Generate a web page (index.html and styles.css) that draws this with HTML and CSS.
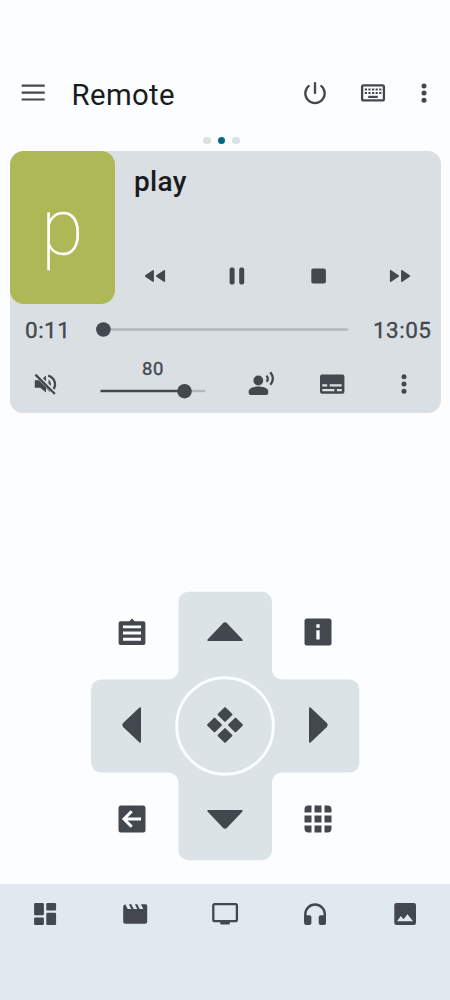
FILE: index.html
```html
<!DOCTYPE html>
<html lang="en">
<head>
<meta charset="utf-8">
<title>Remote</title>
<link rel="stylesheet" href="styles.css">
</head>
<body>
<div class="app">
  <header class="topbar">
    <svg class="icon menu" width="30" height="30" viewBox="-15 -15 30 30"><path d="M-11.3-7.3h23M-11.3-.3h23M-11.3 6.500h23" fill="none" stroke="currentColor" stroke-width="2.200"/></svg>
    <h1>Remote</h1>
    <div class="actions">
      <svg class="icon" width="30" height="30" viewBox="-15 -15 30 30"><g fill="none" stroke="currentColor" stroke-width="2.300" stroke-linecap="round"><path d="M0-9.800V0M-6.300-7A9.700 9.700 0 1 0 6.300-7"/></g></svg>
      <svg class="icon" width="30" height="30" viewBox="-15 -15 30 30"><rect x="-10.900" y="-7.600" width="21.800" height="15" rx="1.400" fill="none" stroke="currentColor" stroke-width="2.300"/><path d="M-8.200-3.500H8.400M-8.200 0H8.400" fill="none" stroke="currentColor" stroke-width="2.200" stroke-dasharray="2.200 1.400"/><path d="M-4.800 3.900H4.800" stroke="currentColor" stroke-width="2.200"/></svg>
      <svg class="icon" width="30" height="30" viewBox="-15 -15 30 30"><circle cy="-7.100" r="2.500"/><circle r="2.500"/><circle cy="7.200" r="2.500"/></svg>
    </div>
  </header>

  <div class="pager"><i></i><i class="on"></i><i></i></div>

  <section class="card">
    <div class="now">
      <div class="cover"><span>p</span></div>
      <div class="info">
        <h2>play</h2>
        <div class="transport">
          <svg class="icon" width="30" height="24" viewBox="-15 -12 30 24"><g stroke="currentColor" stroke-width="1.600" stroke-linejoin="round"><path d="M-9.300 0L-1.900-5.200V5.200ZM1.800 0L9.300-5.200V5.200Z"/></g></svg>
          <svg class="icon" width="30" height="24" viewBox="-15 -12 30 24"><rect x="-7.400" y="-8.500" width="5" height="17" rx="1.900"/><rect x="2.200" y="-8.500" width="5" height="17" rx="1.900"/></svg>
          <svg class="icon" width="30" height="24" viewBox="-15 -12 30 24"><rect x="-7.700" y="-7.400" width="14.600" height="14.800" rx="2"/></svg>
          <svg class="icon" width="30" height="24" viewBox="-15 -12 30 24"><g stroke="currentColor" stroke-width="1.600" stroke-linejoin="round"><path d="M9.300 0L1.900-5.200V5.200ZM-1.800 0L-9.300-5.200V5.200Z"/></g></svg>
        </div>
      </div>
    </div>
    <div class="seek">
      <span class="time">0:11</span>
      <svg class="icon track" width="254" height="16" viewBox="0 0 254 16"><path d="M7 7.500H252" stroke="#b3b8bc" stroke-width="2.400"/><circle cx="7.400" cy="7.500" r="7.300"/></svg>
      <span class="time end">13:05</span>
    </div>
    <div class="controls">
      <svg class="icon" width="30" height="30" viewBox="-15 -15 30 30"><path d="M-10.200-3.800H-6L5 7V8L1 4V8.500L-4.800 3.700H-10.200Z"/><path d="M-3.500-4.500L1-8.500V0ZM3.500-4.400Q6.500-2 5.800 2L3.500-.2Z"/><path d="M3.200-8.300C9.500-6.300 12 .2 8.300 5.400" fill="none" stroke="currentColor" stroke-width="2.300"/><path d="M-8.500-10.600L11.300 9.200" stroke="#dadfe3" stroke-width="2.200"/><path d="M-9.600-9.400L9.900 10" stroke="currentColor" stroke-width="2.300"/></svg>
      <div class="volume">
        <span>80</span>
        <svg class="icon" width="106" height="16" viewBox="0 0 106 16"><path d="M84 8H105.300" stroke="#b3b8bc" stroke-width="2.400"/><path d="M.5 8H84" stroke="currentColor" stroke-width="2.400"/><circle cx="84.500" cy="8.200" r="7.300"/></svg>
      </div>
      <svg class="icon" width="30" height="30" viewBox="-15 -15 30 30"><circle cx="-2.700" cy="-3.500" r="4.900"/><path d="M-12.300 9V7.200C-12.300 3.500-6 2.500-2.700 2.500S7.200 3.500 7.200 7.200V9Q7.200 11 5.200 11H-10.300Q-12.300 11-12.300 9Z"/><path d="M5.600-8.400Q8-5.300 5.600-2.200M9.300-11.800Q14.500-5.400 9.300.8" fill="none" stroke="currentColor" stroke-width="2.300"/></svg>
      <svg class="icon" width="30" height="30" viewBox="-15 -15 30 30"><rect x="-12" y="-9.600" width="24.400" height="19.400" rx="2"/><path d="M-9.700 1.300h4.900M-2.300 1.300H9.700M-9.700 6.200H2.400M4.900 6.200h4.900" stroke="#dadfe3" stroke-width="2.300"/></svg>
      <svg class="icon" width="30" height="30" viewBox="-15 -15 30 30"><circle cy="-7.200" r="2.500"/><circle r="2.500"/><circle cy="7.200" r="2.500"/></svg>
    </div>
  </section>

  <main class="dpad">
    <svg class="cross" width="280" height="280" viewBox="-140 -140 280 280"><path d="M-37-134.300H37A10 10 0 0 1 47-124.300V-56.600A10 10 0 0 0 57-46.600H124.300A10 10 0 0 1 134.300-36.600V36.600A10 10 0 0 1 124.300 46.600H57A10 10 0 0 0 47 56.600V124.300A10 10 0 0 1 37 134.300H-36.500A10 10 0 0 1-46.500 124.300V56.600A10 10 0 0 0-56.500 46.600H-123.900A10 10 0 0 1-133.900 36.600V-36.600A10 10 0 0 1-123.900-46.600H-56.500A10 10 0 0 0-46.500-56.600V-124.300A10 10 0 0 1-36.500-134.300Z" fill="#dbe3e7"/><circle r="48.300" fill="none" stroke="#fbfdff" stroke-width="2.900"/></svg>
    <svg class="icon" width="40" height="40" viewBox="-20 -20 40 40"><path d="M-11.400-10.700H-2.700L0-13.600 2.700-10.700H11.400Q13.400-10.700 13.400-8.700V11Q13.400 13 11.400 13H-11.400Q-13.400 13-13.400 11V-8.700Q-13.400-10.700-11.400-10.700Z"/><path d="M-9-5.100H9M-9 1H9M-9 7.200H9" stroke="#fbfdff" stroke-width="2.900"/></svg>
    <svg class="icon" width="40" height="40" viewBox="-20 -20 40 40"><path d="M-16.800 8.100L-1.600-8Q0-9.400 1.600-8L16.800 8.100Z" stroke="currentColor" stroke-width="1.800" stroke-linejoin="round"/></svg>
    <svg class="icon" width="40" height="40" viewBox="-20 -20 40 40"><rect x="-13.500" y="-13.500" width="27" height="27" rx="2.500"/><path d="M0-7.700V-4.200M0-1.700V7.500" stroke="#fbfdff" stroke-width="3.300"/></svg>
    <svg class="icon" width="40" height="40" viewBox="-20 -20 40 40"><path d="M8.100-16.800L-8-1.600Q-9.400 0-8 1.600L8.100 16.800Z" stroke="currentColor" stroke-width="1.800" stroke-linejoin="round"/></svg>
    <svg class="icon" width="40" height="40" viewBox="-20 -20 40 40"><g stroke="currentColor" stroke-width="2" stroke-linejoin="round"><path d="M0-16.900L6.400-10.500 0-4.100-6.400-10.500ZM0 16.900L6.400 10.500 0 4.100-6.400 10.500ZM-16.900 0L-10.500-6.400-4.100 0-10.500 6.400ZM16.900 0L10.500-6.400 4.100 0 10.500 6.400Z"/></g></svg>
    <svg class="icon" width="40" height="40" viewBox="-20 -20 40 40"><path d="M-8.100-16.800L8-1.600Q9.400 0 8 1.600L-8.100 16.800Z" stroke="currentColor" stroke-width="1.800" stroke-linejoin="round"/></svg>
    <svg class="icon" width="40" height="40" viewBox="-20 -20 40 40"><rect x="-13.500" y="-13.500" width="27" height="27" rx="2.500"/><path d="M9 0H-7M-.3-7.700L-8 0-.3 7.700" fill="none" stroke="#fbfdff" stroke-width="3"/></svg>
    <svg class="icon" width="40" height="40" viewBox="-20 -20 40 40"><path d="M-16.800-8.100L-1.600 8Q0 9.400 1.600 8L16.800-8.100Z" stroke="currentColor" stroke-width="1.800" stroke-linejoin="round"/></svg>
    <svg class="icon" width="40" height="40" viewBox="-20 -20 40 40"><rect x="-13.500" y="-13.500" width="27" height="27" rx="4"/><path d="M-5-14V14M5-14V14M-14-5H14M-14 5H14" stroke="#fbfdff" stroke-width="3"/></svg>
  </main>

  <nav class="tabs">
    <svg class="icon" width="30" height="30" viewBox="-15 -15 30 30"><rect x="-10.900" y="-10.900" width="9.800" height="12.200" rx="1.200"/><rect x="-10.900" y="3.600" width="9.800" height="7.400" rx="1.200"/><rect x="1.300" y="-10.900" width="9.800" height="7.400" rx="1.200"/><rect x="1.300" y="-1.200" width="9.800" height="12.200" rx="1.200"/></svg>
    <svg class="icon" width="30" height="30" viewBox="-15 -15 30 30"><path d="M-9.700-9.700L-7.300-4.900H-3.700L-6.100-9.700H-3.700L-1.300-4.900H2.300L-.1-9.700H2.300L4.700-4.900H8.300L5.900-9.700H10.700Q12.200-9.700 12.200-8V7.700Q12.200 9.800 10.100 9.800H-9.700Q-11.800 9.800-11.800 7.700V-7.500Q-11.800-9-9.700-9.700Z"/></svg>
    <svg class="icon" width="30" height="30" viewBox="-15 -15 30 30"><rect x="-11.700" y="-9.800" width="23.600" height="17" rx="1.400" fill="none" stroke="currentColor" stroke-width="2.300"/><path d="M-4.800 7H4.900V9.500Q4.900 10.600 3.800 10.600H-3.700Q-4.800 10.600-4.800 9.500Z"/></svg>
    <svg class="icon" width="30" height="30" viewBox="-15 -15 30 30"><path d="M-9.700 8V.3A9.700 9.700 0 0 1 9.800.3V8" fill="none" stroke="currentColor" stroke-width="2.400"/><rect x="-10.900" y="1.200" width="7.300" height="9.800" rx="2"/><rect x="3.700" y="1.200" width="7.300" height="9.800" rx="2"/></svg>
    <svg class="icon" width="30" height="30" viewBox="-15 -15 30 30"><rect x="-10.700" y="-10.900" width="21.700" height="21.900" rx="2.200"/><path d="M-8 7.200L-4.200 2-1.500 5.200 2.500.2 8 7.200Z" fill="#e1e9f0"/></svg>
  </nav>
</div>
</body>
</html>
```
FILE: styles.css
```css
* { box-sizing: border-box; }
body { margin: 0; background: #fbfdff; color: #42484d; font-family: Roboto, "Noto Sans", sans-serif; }
.app { width: 450px; height: 1000px; display: flex; flex-direction: column; overflow: hidden; }
.icon { display: block; flex: none; fill: currentColor; }

.topbar { display: flex; align-items: center; height: 66px; margin-top: 60px; padding: 0 11.500px 0 18px; }
.topbar h1 { margin: 4px 0 0 23.500px; font-size: 29.300px; line-height: 34px; font-weight: 400; color: #191c1e; letter-spacing: .4px; }
.actions { display: flex; margin-left: auto; }
.actions .icon:nth-child(2) { margin-left: 28px; }
.actions .icon:nth-child(3) { margin-left: 20.500px; }

.pager { display: flex; justify-content: center; align-items: center; gap: 7px; height: 25px; padding-top: 4px; margin-left: -7px; }
.pager i { width: 7.400px; height: 7.400px; border-radius: 50%; background: #dbe1e5; }
.pager .on { background: #046680; }

.card { margin: 0 9.500px; height: 261.500px; border-radius: 13px; background: #dadfe3; }
.now { display: flex; height: 153px; }
.cover { width: 105.500px; height: 153px; border-radius: 14px; background: #aeb857; color: #fff; display: flex; justify-content: center; align-items: center; }
.cover span { font-size: 77px; line-height: 88px; font-weight: 100; -webkit-text-stroke: .5px #fff; }
.info { flex: 1; display: flex; flex-direction: column; justify-content: space-between; padding: 14px 0 16.500px; }
.info h2 { margin: 0 0 0 19px; font-size: 28px; line-height: 34px; font-weight: 500; color: #191c1e; letter-spacing: .3px; }
.transport { display: flex; justify-content: space-between; padding: 0 25px 0 25px; }
.seek { display: flex; align-items: center; height: 52px; padding: 0 9px 0 15.500px; }
.time { width: 70.500px; font-size: 22.500px; line-height: 28px; font-weight: 400; letter-spacing: .5px; -webkit-text-stroke: .35px currentColor; }
.time.end { width: auto; margin-left: auto; }
.controls { display: flex; align-items: center; height: 56px; padding-left: 20.500px; }
.volume { display: flex; flex-direction: column; align-items: center; width: 106px; margin: -11px 40px 0; }
.volume span { font-size: 18.500px; line-height: 22px; font-weight: 400; letter-spacing: .5px; margin-bottom: 3px; -webkit-text-stroke: .35px currentColor; }
.controls > .icon:nth-child(4) { margin-left: 41px; }
.controls > .icon:nth-child(5) { margin-left: 42px; }

.dpad { position: relative; display: grid; grid-template: repeat(3, 1fr) / repeat(3, 1fr); place-items: center; width: 280px; height: 280px; margin: auto auto 18.500px; }
.dpad .icon { position: relative; }
.cross { position: absolute; inset: 0; }

.tabs { display: grid; grid-template-columns: repeat(5, 1fr); justify-items: center; align-items: start; height: 116px; padding-top: 15px; background: #e1e9f0; }
```
